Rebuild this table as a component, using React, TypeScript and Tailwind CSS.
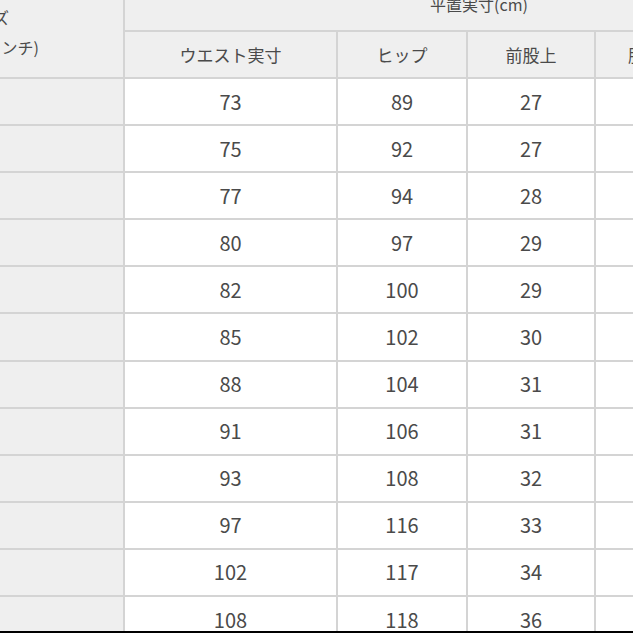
const rows: [string, string, string][] = [
  ['73', '89', '27'],
  ['75', '92', '27'],
  ['77', '94', '28'],
  ['80', '97', '29'],
  ['82', '100', '29'],
  ['85', '102', '30'],
  ['88', '104', '31'],
  ['91', '106', '31'],
  ['93', '108', '32'],
  ['97', '116', '33'],
  ['102', '117', '34'],
  ['108', '118', '36'],
];

const font = { fontFamily: '"Noto Sans CJK JP", "Noto Sans", sans-serif' };

export default function App() {
  return (
    <div className="w-[633px] h-[633px] bg-black overflow-hidden">
      <div className="h-[631px] overflow-hidden bg-[#d4d4d4] text-[#4a4a4a]" style={font}>
        <div className="mt-[-16px] w-[900px] flex gap-[2px]">
          {/* left column */}
          <div className="w-[123px] shrink-0 flex flex-col gap-[2px]">
            <div className="h-[93px] bg-[#efefef] flex flex-col justify-center gap-[8px] text-[16px] leading-[22px] pt-[2px]">
              <div className="w-[9px] flex justify-end whitespace-nowrap">サイズ</div>
              <div className="w-[39px] flex justify-end whitespace-nowrap">ウエスト(インチ)</div>
            </div>
            {rows.map((r, i) => (
              <div key={i} className="h-[45.1px] bg-[#efefef]" />
            ))}
          </div>

          {/* measurement columns */}
          <div className="flex-1 flex flex-col gap-[2px]">
            <div className="h-[46px] bg-[#efefef] flex items-end pb-[16px]">
              <div className="w-[708px] text-center text-[16px] leading-[20px]">平置実寸(cm)</div>
            </div>
            <div className="grid grid-cols-[211px_128px_126px_126px_126px] gap-[2px]">
              <div className="h-[45px] bg-[#efefef] flex items-center justify-center text-[17px]">ウエスト実寸</div>
              <div className="h-[45px] bg-[#efefef] flex items-center justify-center text-[17px]">ヒップ</div>
              <div className="h-[45px] bg-[#efefef] flex items-center justify-center text-[17px]">前股上</div>
              <div className="h-[45px] bg-[#efefef] flex items-center justify-start pl-[32px] text-[17px] whitespace-nowrap">股下</div>
              <div className="h-[45px] bg-[#efefef]" />
              {rows.map((r, i) => (
                <div key={i} className="contents">
                  <div className="h-[45.1px] bg-white flex items-center justify-center text-[20px]">{r[0]}</div>
                  <div className="h-[45.1px] bg-white flex items-center justify-center text-[20px]">{r[1]}</div>
                  <div className="h-[45.1px] bg-white flex items-center justify-center text-[20px]">{r[2]}</div>
                  <div className="h-[45.1px] bg-white" />
                  <div className="h-[45.1px] bg-white" />
                </div>
              ))}
            </div>
          </div>
        </div>
      </div>
    </div>
  );
}
